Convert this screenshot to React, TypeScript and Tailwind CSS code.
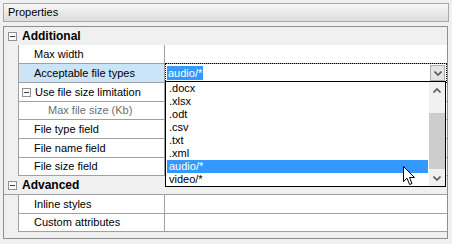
import { ReactNode } from 'react';

type Row =
    | { kind: 'category'; label: string; h: number }
    | { kind: 'item'; label: string; h: number; level?: number; toggle?: boolean; muted?: boolean; selected?: boolean };

const ROWS: Row[] = [
    { kind: 'category', label: 'Additional', h: 18 },
    { kind: 'item', label: 'Max width', h: 19 },
    { kind: 'item', label: 'Acceptable file types', h: 19, selected: true },
    { kind: 'item', label: 'Use file size limitation', h: 19, toggle: true },
    { kind: 'item', label: 'Max file size (Kb)', h: 18, level: 1, muted: true },
    { kind: 'item', label: 'File type field', h: 19 },
    { kind: 'item', label: 'File name field', h: 19 },
    { kind: 'item', label: 'File size field', h: 18 },
    { kind: 'category', label: 'Advanced', h: 19 },
    { kind: 'item', label: 'Inline styles', h: 19 },
    { kind: 'item', label: 'Custom attributes', h: 18 },
];

const OPTIONS = ['.docx', '.xlsx', '.odt', '.csv', '.txt', '.xml', 'audio/*', 'video/*'];

function MinusBox() {
    return (
        <span className="w-[9px] h-[9px] border border-[#919191] bg-[#fbfbfb] flex items-center justify-center shrink-0">
            <span className="w-[5px] h-px bg-[#3c3c3c]" />
        </span>
    );
}

function Chevron({ up = false }: { up?: boolean }) {
    return (
        <svg width="8" height="5" viewBox="0 0 8 5" className={up ? 'rotate-180' : ''}>
            <path d="M0.5 0.5 L4 4 L7.5 0.5" fill="none" stroke="#5a5a5a" strokeWidth="1.6" />
        </svg>
    );
}

function ItemRow({ row, children }: { row: Extract<Row, { kind: 'item' }>; children?: ReactNode }) {
    return (
        <div className="flex" style={{ height: row.h }}>
            <div className="w-[15px] shrink-0 bg-[#f0f0f0] border-r border-[#a0a0a0]" />
            <div
                className={`w-[146px] shrink-0 border-r border-b border-[#a0a0a0] flex items-center ${
                    row.selected ? 'bg-[#cce4f7]' : 'bg-white'
                }`}
            >
                {row.toggle ? (
                    <span className="flex items-center gap-[4px] pl-[3px]">
                        <MinusBox />
                        <span className="text-black">{row.label}</span>
                    </span>
                ) : (
                    <span className={row.level ? 'pl-[29px] text-[#6d6d6d]' : 'pl-[15px] text-black'}>{row.label}</span>
                )}
            </div>
            <div className="flex-1 border-b border-[#a0a0a0] bg-white relative">{children}</div>
        </div>
    );
}

function Editor() {
    return (
        <div className="absolute inset-x-0 -top-px h-[20px] border border-dotted border-black flex items-center">
            <span className="ml-px px-px h-[14px] leading-[14px] bg-[#3399ff] text-white">audio/*</span>
            <span className="ml-auto mr-[1px] w-[15px] h-[16px] bg-[#e4e4e4] border border-[#adadad] flex items-center justify-center">
                <Chevron />
            </span>
        </div>
    );
}

function DropdownList() {
    return (
        <div className="absolute left-[165px] top-[81px] w-[281px] h-[106px] border border-black bg-white flex">
            <div className="flex-1 py-0 pl-px">
                {OPTIONS.map((opt) => (
                    <div
                        key={opt}
                        className={`h-[13px] leading-[13px] pl-[2px] ${
                            opt === 'audio/*' ? 'bg-[#3399ff] text-white' : 'text-black'
                        }`}
                    >
                        {opt}
                    </div>
                ))}
            </div>
            <div className="w-[16px] ml-px bg-[#f0f0f0] flex flex-col">
                <div className="h-[16px] flex items-center justify-center">
                    <Chevron up />
                </div>
                <div className="flex-1 flex flex-col pt-[15px] pb-px">
                    <div className="h-[56px] bg-[#cdcdcd]" />
                </div>
                <div className="h-[16px] flex items-center justify-center">
                    <Chevron />
                </div>
            </div>
        </div>
    );
}

function Cursor() {
    return (
        <svg className="absolute left-[403px] top-[166px]" width="13" height="20" viewBox="0 0 13 20">
            <path
                d="M0.5 0.5 L0.5 15.5 L4 12.2 L6.6 18.5 L9 17.5 L6.5 11.5 L11.5 11.5 Z"
                fill="white"
                stroke="black"
                strokeWidth="1"
                strokeLinejoin="miter"
            />
        </svg>
    );
}

export default function App() {
    return (
        <div className="w-[452px] h-[244px] bg-[#f0f0f0] relative overflow-hidden font-['Liberation_Sans',Arial,sans-serif] text-[11px] pt-[3px]">
            <div className="mx-[3px] w-[446px] h-[19px] border border-[#a9a9a9] bg-gradient-to-b from-[#f7f7f7] to-[#dddddd] flex items-center pl-[4px] text-black">
                Properties
            </div>
            <div className="mt-[4px] ml-[3px] w-[445px] h-[213px] border border-[#8e8f8f] bg-[#f0f0f0] flex flex-col">
                {ROWS.map((row) =>
                    row.kind === 'category' ? (
                        <div
                            key={row.label}
                            className={`flex items-center gap-[5px] pl-[4px] bg-[#f0f0f0] ${
                                row.label === 'Advanced' ? 'border-b border-[#a0a0a0]' : ''
                            }`}
                            style={{ height: row.h }}
                        >
                            <MinusBox />
                            <span className="font-bold text-black text-[12px]">{row.label}</span>
                        </div>
                    ) : (
                        <ItemRow key={row.label} row={row}>
                            {row.selected ? <Editor /> : null}
                        </ItemRow>
                    )
                )}
            </div>
            <DropdownList />
            <Cursor />
        </div>
    );
}
